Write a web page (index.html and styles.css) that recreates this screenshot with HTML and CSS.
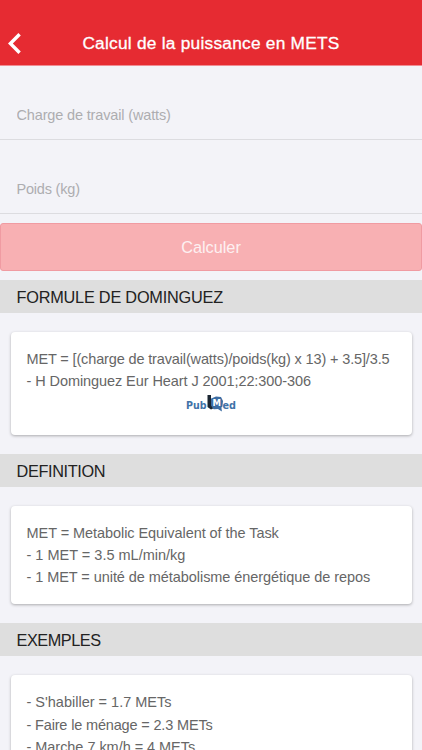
FILE: index.html
```html
<!DOCTYPE html>
<html lang="fr">
<head>
  <meta charset="UTF-8">
  <meta name="viewport" content="width=device-width, initial-scale=1">
  <title>Calcul de la puissance en METS</title>
  <link rel="stylesheet" href="styles.css">
</head>
<body>

<header class="bar">
  <a class="back" href="#" aria-label="Retour">
    <svg width="13" height="21" viewBox="0 0 13 21"><path d="M11.6 1.2 2.4 10.5l9.2 9.3" fill="none" stroke="#fff" stroke-width="3.4"/></svg>
  </a>
  <h1 class="title">Calcul de la puissance en METS</h1>
</header>

<form class="form">
  <label class="item"><input class="charge" type="text" placeholder="Charge de travail (watts)"></label>
  <label class="item"><input class="poids" type="text" placeholder="Poids (kg)"></label>
  <button class="button" type="button" disabled>Calculer</button>
</form>

<h2 class="divider"><span class="formule">FORMULE DE DOMINGUEZ</span></h2>
<div class="card">
  <p class="line l1">MET = [(charge de travail(watts)/poids(kg) x 13) + 3.5]/3.5</p>
  <p class="line l2">- H Dominguez Eur Heart J 2001;22:300-306</p>
  <div class="pubmed">
    <svg width="52" height="20" viewBox="0 0 52 20">
      <path d="M25 6 31 3.500l5 .5 2 4-.6 5.500-1 1 .5 4-4-2.500-4 .3-4-2.300z" fill="#3c6da3"/>
      <path d="M22.500 2h3.500v10.500l2 3-2 1-3.500-2.500z" fill="#1b2632"/>
      <text class="logo" x="1" y="16" textLength="20.5" lengthAdjust="spacingAndGlyphs">Pub</text>
      <text class="logo logo-m" x="27.5" y="13" textLength="8.5" lengthAdjust="spacingAndGlyphs">M</text>
      <text class="logo" x="37.5" y="16" textLength="13.5" lengthAdjust="spacingAndGlyphs">ed</text>
    </svg>
  </div>
</div>

<h2 class="divider"><span class="definition">DEFINITION</span></h2>
<div class="card">
  <p class="line l3">MET = Metabolic Equivalent of the Task</p>
  <p class="line l4">- 1 MET = 3.5 mL/min/kg</p>
  <p class="line l5">- 1 MET = unité de métabolisme énergétique de repos</p>
</div>

<h2 class="divider"><span class="exemples">EXEMPLES</span></h2>
<div class="card">
  <p class="line l6">- S'habiller = 1.7 METs</p>
  <p class="line l7">- Faire le ménage = 2.3 METs</p>
  <p class="line l8">- Marche 7 km/h = 4 METs</p>
</div>

</body>
</html>
```

FILE: styles.css
```css
* {
  box-sizing: border-box;
}
body {
  margin: 0;
  height: 750px;
  overflow: hidden;
  background: #f3f3f8;
  font-family: "Liberation Sans", Arial, sans-serif;
}
.bar {
  display: grid;
  grid-template-columns: 40px 1fr 40px;
  align-items: center;
  height: 66px;
  padding-top: 21px;
  background: #e62b32;
  border-bottom: 1px solid #f08c93;
}
.back {
  display: flex;
  padding-left: 8px;
}
.title {
  margin: 0;
  text-align: center;
  white-space: nowrap;
  font-size: 17.3px;
  font-weight: normal;
  letter-spacing: 0.25px;
  color: #fff;
  -webkit-text-stroke: 0.3px #fff;
}
.item {
  display: block;
  height: 74px;
  padding: 34px 16.5px 0;
  border-bottom: 1px solid #dcdce0;
}
.item input {
  display: block;
  width: 100%;
  height: 30px;
  padding: 0;
  border: none;
  background: transparent;
  font-family: inherit;
  font-size: 14.5px;
}
.item input::placeholder {
  color: #adadb0;
}
.charge {
  letter-spacing: -0.15px;
}
.poids {
  letter-spacing: -0.2px;
}
.button {
  display: block;
  width: 100%;
  height: 48px;
  margin: 9px 0;
  border: 1px solid #f09ba2;
  border-radius: 3px;
  background: #f8b0b3;
  font-family: inherit;
  font-size: 16.3px;
  color: #fdf0f2;
}
.divider {
  height: 33px;
  margin: 0;
  padding-left: 16.5px;
  line-height: 34px;
  background: #dedede;
  font-size: 16.3px;
  font-weight: normal;
  color: #222;
}
.formule {
  letter-spacing: -0.22px;
}
.definition {
  letter-spacing: -0.36px;
}
.exemples {
  letter-spacing: -0.45px;
}
.card {
  margin: 19px 10.5px;
  padding: 16px;
  border-radius: 4px;
  background: #fff;
  box-shadow: 0 1px 3px rgba(0,0,0,0.3);
}
.line {
  margin: 0;
  height: 22.3px;
  line-height: 22.3px;
  white-space: nowrap;
  font-size: 14.5px;
  color: #666;
}
.l1 {
  letter-spacing: -0.14px;
}
.l2 {
  letter-spacing: -0.08px;
}
.l3, .l5 {
  letter-spacing: -0.06px;
}
.l7 {
  letter-spacing: -0.16px;
}
.l8 {
  letter-spacing: -0.04px;
}
.pubmed {
  display: flex;
  justify-content: center;
  height: 26px;
}
.logo {
  font-family: "DejaVu Sans", sans-serif;
  font-size: 10.5px;
  font-weight: bold;
  fill: #4173a8;
}
.logo-m {
  font-size: 8.5px;
  fill: #fff;
}
```
